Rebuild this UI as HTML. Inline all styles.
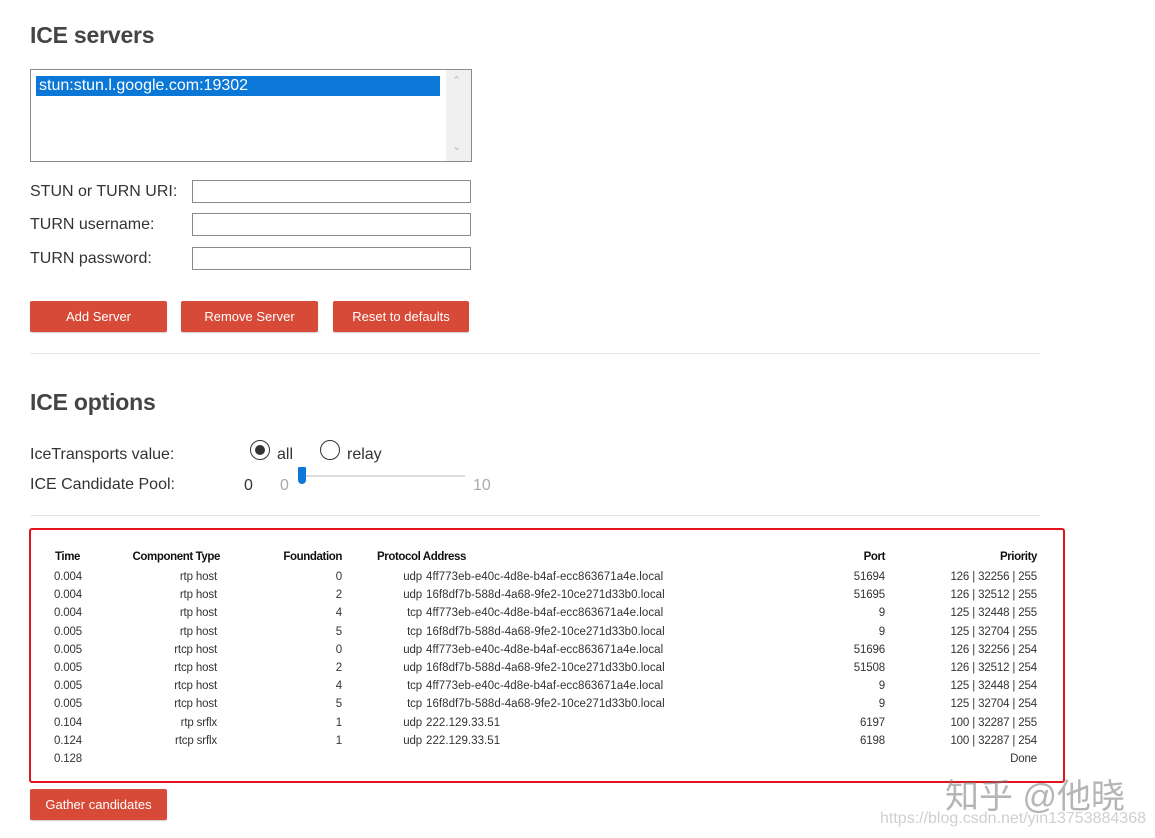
<!DOCTYPE html>
<html><head><meta charset="utf-8"><style>
*{margin:0;padding:0;box-sizing:border-box}
body{width:1155px;height:838px;background:#fff;position:relative;overflow:hidden;font-family:"Liberation Sans",sans-serif;color:#333}
.a{position:absolute;white-space:nowrap}
h2{position:absolute;font-size:23px;font-weight:bold;color:#444;letter-spacing:-0.2px}
.lbl{font-size:16px;color:#333}
.inp{position:absolute;border:1px solid #8a8a8a;background:#fff;height:23px;width:279px;left:192px}
.btn{position:absolute;background:#d84a38;color:#fff;font-size:13px;text-align:center;height:31px;line-height:31px;border-radius:2px;box-shadow:0 1px 1px rgba(0,0,0,.2)}
.hr{position:absolute;left:30px;width:1010px;height:1px;background:#e5e5e5}
.t{font-size:11.5px;color:#333;letter-spacing:-0.15px}
.th{font-weight:bold;font-size:11.5px;letter-spacing:-0.4px;color:#111}
.r{text-align:right}
</style></head><body>
<h2 style="left:30px;top:22px">ICE servers</h2>
<div class="a" style="left:30px;top:69px;width:442px;height:93px;border:1px solid #8a8a8a"></div>
<div class="a" style="left:446px;top:70px;width:25px;height:91px;background:#f0f0f0"></div>
<div class="a" style="left:452px;top:74px;font-size:11px;color:#bbb">&#8963;</div>
<div class="a" style="left:452px;top:140px;font-size:11px;color:#bbb">&#8964;</div>
<div class="a" style="left:36px;top:76px;width:404px;height:20px;background:#0b78d7;color:#fff;font-size:16px;line-height:20px;padding-left:3px">stun:stun.l.google.com:19302</div>
<div class="a lbl" style="left:30px;top:183px">STUN or TURN URI:</div>
<div class="a lbl" style="left:30px;top:216px">TURN username:</div>
<div class="a lbl" style="left:30px;top:250px">TURN password:</div>
<div class="inp" style="top:180px"></div>
<div class="inp" style="top:213px"></div>
<div class="inp" style="top:247px"></div>
<div class="btn" style="left:30px;top:301px;width:137px">Add Server</div>
<div class="btn" style="left:181px;top:301px;width:137px">Remove Server</div>
<div class="btn" style="left:333px;top:301px;width:136px">Reset to defaults</div>
<div class="hr" style="top:353px"></div>
<h2 style="left:30px;top:389px">ICE options</h2>
<div class="a lbl" style="left:30px;top:446px">IceTransports value:</div>
<div class="a lbl" style="left:30px;top:476px">ICE Candidate Pool:</div>
<div class="a" style="left:250px;top:440px;width:20px;height:20px;border:1.5px solid #333;border-radius:50%"></div>
<div class="a" style="left:255px;top:445px;width:10px;height:10px;background:#333;border-radius:50%"></div>
<div class="a lbl" style="left:277px;top:446px">all</div>
<div class="a" style="left:320px;top:440px;width:20px;height:20px;border:1.5px solid #333;border-radius:50%"></div>
<div class="a lbl" style="left:347px;top:446px">relay</div>
<div class="a lbl" style="left:244px;top:477px">0</div>
<div class="a lbl" style="left:280px;top:477px;color:#aaa">0</div>
<div class="a" style="left:298px;top:475px;width:167px;height:2px;background:#ddd"></div>
<div class="a" style="left:298px;top:467px;width:8px;height:17px;background:#0b78d7;border-radius:1px 1px 4px 4px"></div>
<div class="a lbl" style="left:473px;top:477px;color:#aaa">10</div>
<div class="hr" style="top:515px"></div>
<div class="a" style="left:29px;top:528px;width:1036px;height:255px;border:2.5px solid #e3131b;border-radius:3px"></div>

<div class="a th" style="left:55px;top:551px">Time</div>
<div class="a th r" style="left:100px;width:120px;top:551px">Component Type</div>
<div class="a th r" style="left:240px;width:102px;top:551px">Foundation</div>
<div class="a th" style="left:377px;top:551px">Protocol Address</div>
<div class="a th r" style="left:800px;width:85px;top:551px">Port</div>
<div class="a th r" style="left:900px;width:137px;top:551px">Priority</div>

<div class="a t" style="left:54px;top:568px;line-height:18.2px">0.004<br>0.004<br>0.004<br>0.005<br>0.005<br>0.005<br>0.005<br>0.005<br>0.104<br>0.124<br>0.128</div>
<div class="a t r" style="left:100px;width:117px;top:568px;line-height:18.2px">rtp host<br>rtp host<br>rtp host<br>rtp host<br>rtcp host<br>rtcp host<br>rtcp host<br>rtcp host<br>rtp srflx<br>rtcp srflx</div>
<div class="a t r" style="left:240px;width:102px;top:568px;line-height:18.2px">0<br>2<br>4<br>5<br>0<br>2<br>4<br>5<br>1<br>1</div>
<div class="a t r" style="left:380px;width:42px;top:568px;line-height:18.2px">udp<br>udp<br>tcp<br>tcp<br>udp<br>udp<br>tcp<br>tcp<br>udp<br>udp</div>
<div class="a t" style="left:426px;top:568px;line-height:18.2px;letter-spacing:0.05px">4ff773eb-e40c-4d8e-b4af-ecc863671a4e.local<br>16f8df7b-588d-4a68-9fe2-10ce271d33b0.local<br>4ff773eb-e40c-4d8e-b4af-ecc863671a4e.local<br>16f8df7b-588d-4a68-9fe2-10ce271d33b0.local<br>4ff773eb-e40c-4d8e-b4af-ecc863671a4e.local<br>16f8df7b-588d-4a68-9fe2-10ce271d33b0.local<br>4ff773eb-e40c-4d8e-b4af-ecc863671a4e.local<br>16f8df7b-588d-4a68-9fe2-10ce271d33b0.local<br>222.129.33.51<br>222.129.33.51</div>
<div class="a t r" style="left:800px;width:85px;top:568px;line-height:18.2px">51694<br>51695<br>9<br>9<br>51696<br>51508<br>9<br>9<br>6197<br>6198</div>
<div class="a t r" style="left:900px;width:137px;top:568px;line-height:18.2px">126 | 32256 | 255<br>126 | 32512 | 255<br>125 | 32448 | 255<br>125 | 32704 | 255<br>126 | 32256 | 254<br>126 | 32512 | 254<br>125 | 32448 | 254<br>125 | 32704 | 254<br>100 | 32287 | 255<br>100 | 32287 | 254<br>Done</div>

<div class="btn" style="left:30px;top:789px;width:137px">Gather candidates</div>
<div class="a" style="left:945px;top:769px;font-size:34px;color:rgba(120,120,120,.55);font-family:'Liberation Sans','Noto Sans CJK SC',sans-serif">知乎 @他晓</div>
<div class="a" style="left:880px;top:810px;font-size:16px;color:rgba(160,160,160,.5)">https://blog.csdn.net/yin13753884368</div>
</body></html>
